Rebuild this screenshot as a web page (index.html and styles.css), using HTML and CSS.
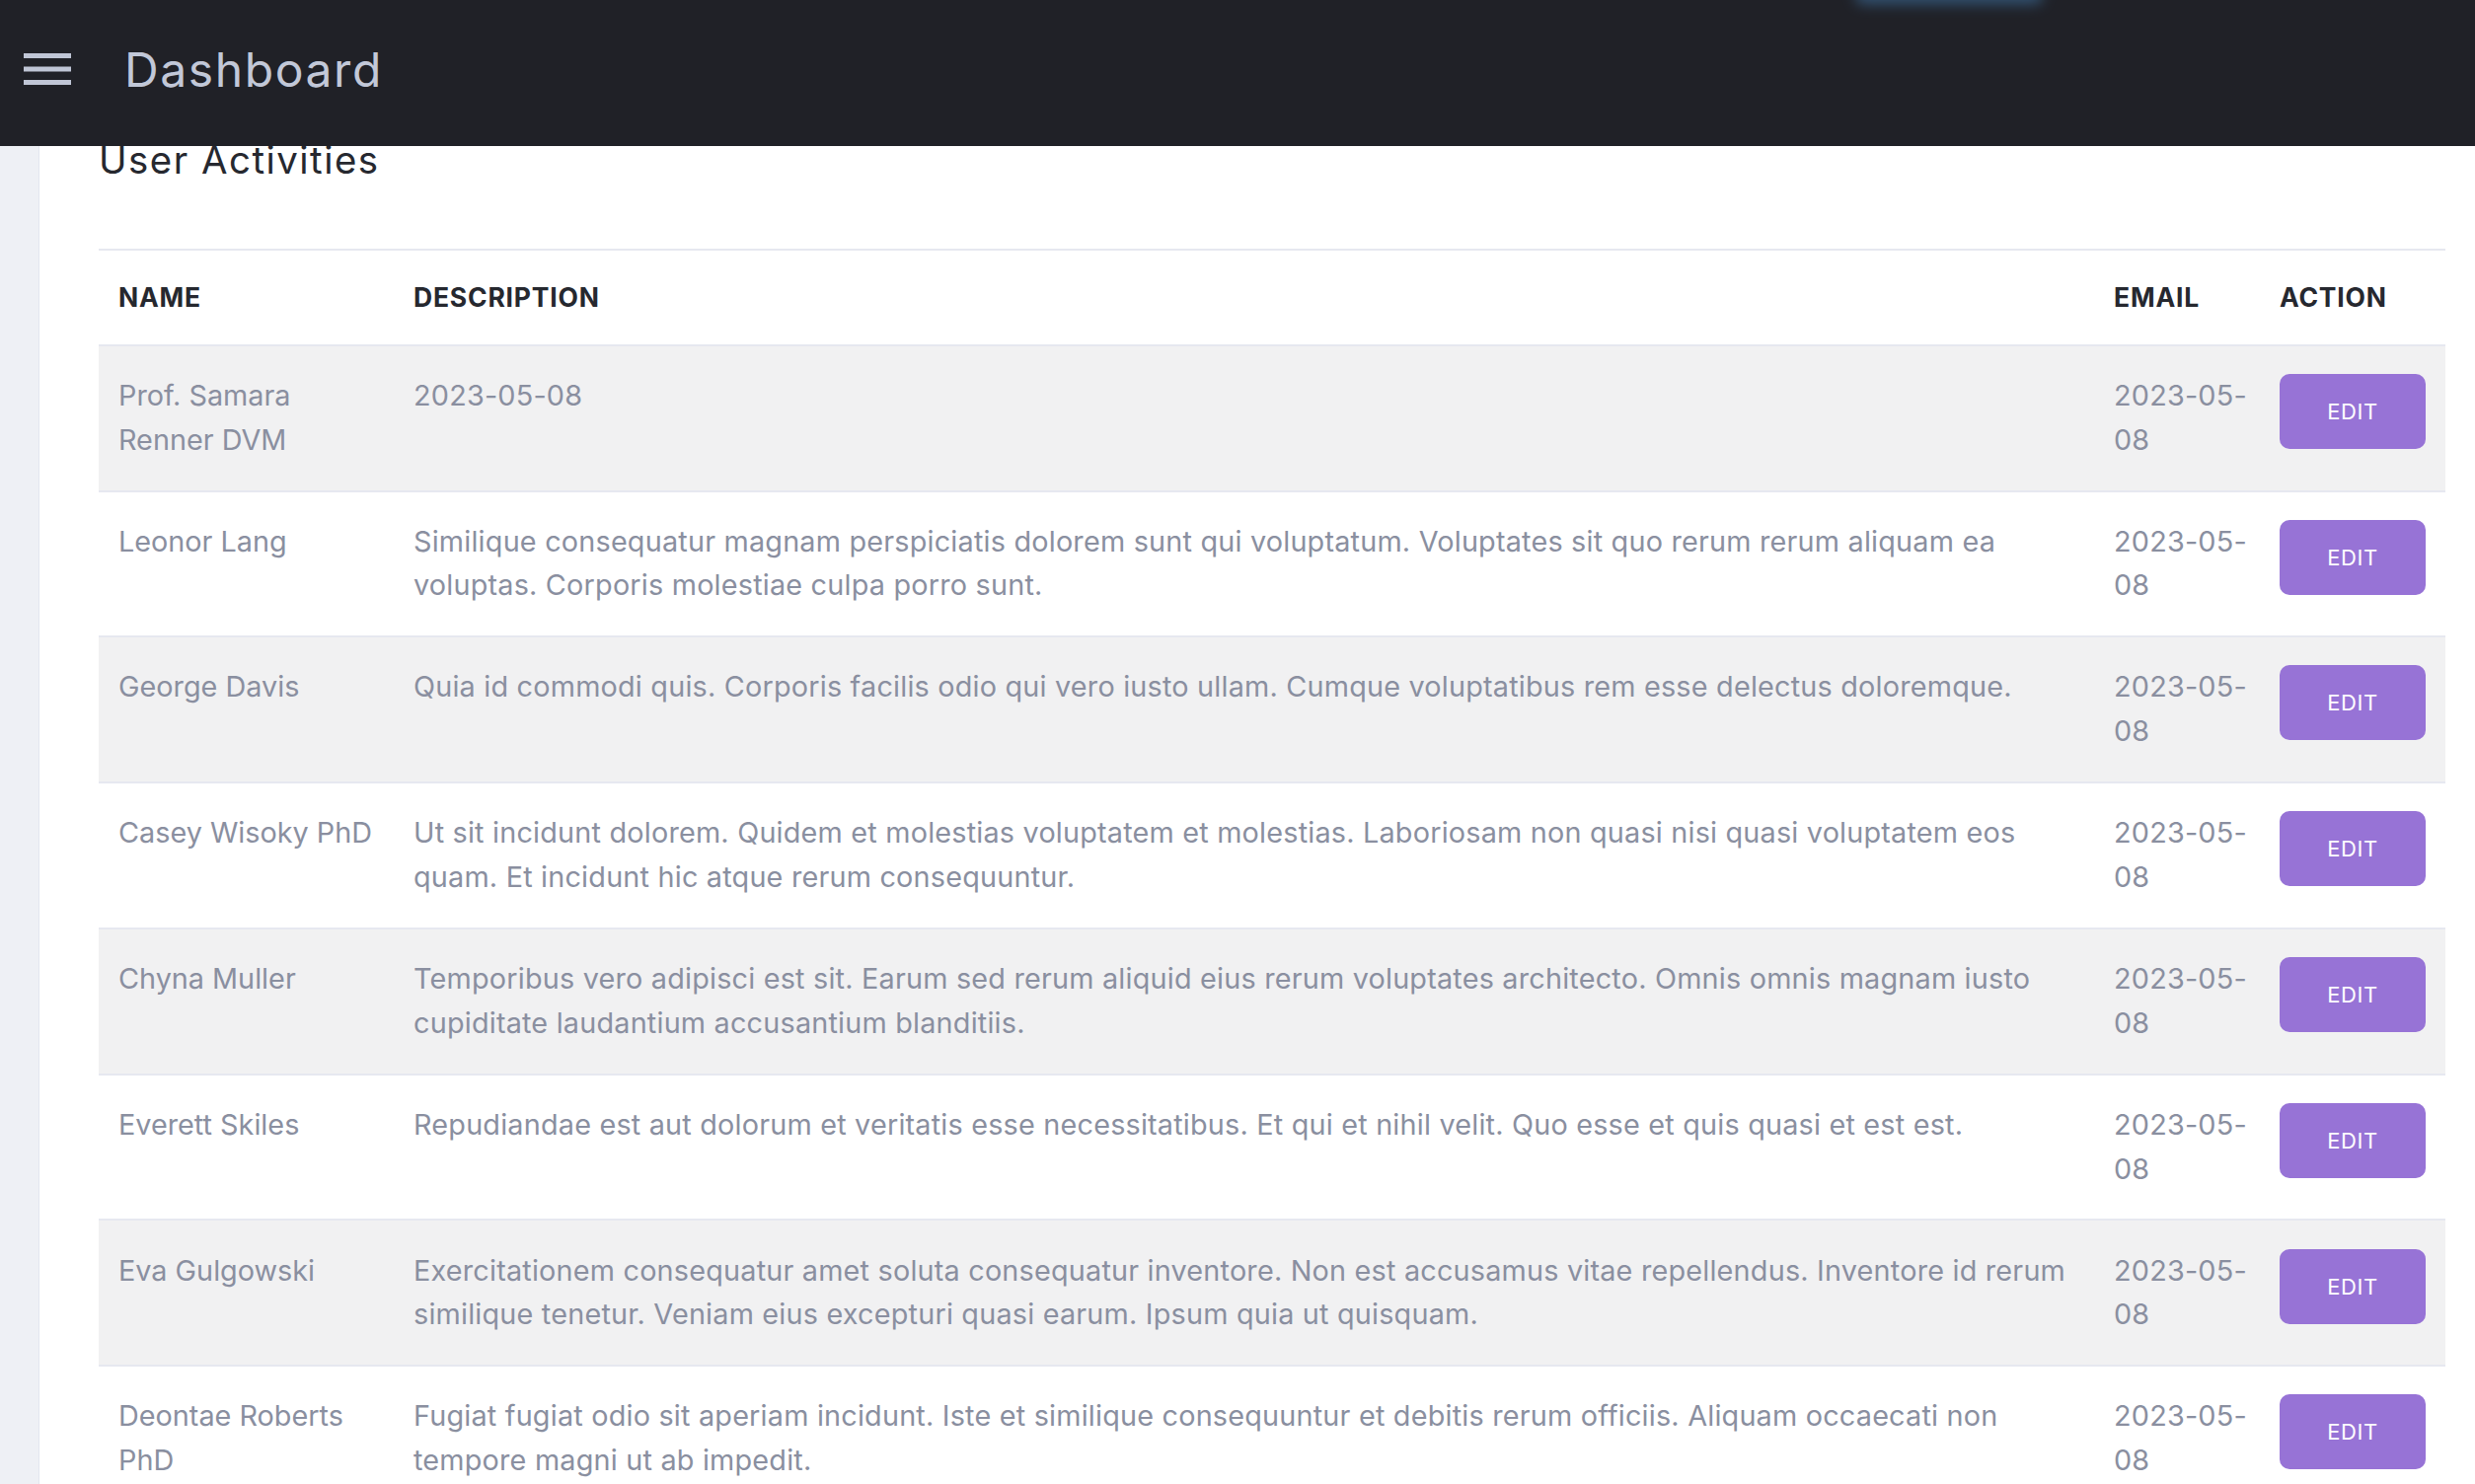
FILE: index.html
```html
<!DOCTYPE html>
<html lang="en">
<head>
<meta charset="utf-8">
<title>Dashboard</title>
<link rel="stylesheet" href="styles.css">
</head>
<body>
<header class="topbar">
  <div class="glow"></div>
  <button class="menu-btn" aria-label="Menu">
    <svg width="48" height="32" viewBox="0 0 48 32"><rect x="0" y="0" width="48" height="5" fill="#c0c6d6"/><rect x="0" y="13.5" width="48" height="5" fill="#c0c6d6"/><rect x="0" y="27" width="48" height="5" fill="#c0c6d6"/></svg>
  </button>
  <h1 class="brand">Dashboard</h1>
</header>
<div class="layout">
  <aside class="sidebar"></aside>
  <main class="main">
    <h2 class="title">User Activities</h2>
    <table class="activity-table">
      <colgroup>
        <col class="col-name"><col class="col-desc"><col class="col-email"><col class="col-action">
      </colgroup>
      <thead>
        <tr><th class="th-name">Name</th><th>Description</th><th>Email</th><th class="th-action">Action</th></tr>
      </thead>
      <tbody>
        <tr><td class="td-name">Prof. Samara<br>Renner DVM</td><td>2023-05-08</td><td>2023-05-<br>08</td><td class="td-action"><button class="btn-edit">EDIT</button></td></tr>
        <tr><td class="td-name">Leonor Lang</td><td>Similique consequatur magnam perspiciatis dolorem sunt qui voluptatum. Voluptates sit quo rerum rerum aliquam ea<br>voluptas. Corporis molestiae culpa porro sunt.</td><td>2023-05-<br>08</td><td class="td-action"><button class="btn-edit">EDIT</button></td></tr>
        <tr><td class="td-name">George Davis</td><td>Quia id commodi quis. Corporis facilis odio qui vero iusto ullam. Cumque voluptatibus rem esse delectus doloremque.</td><td>2023-05-<br>08</td><td class="td-action"><button class="btn-edit">EDIT</button></td></tr>
        <tr><td class="td-name">Casey Wisoky PhD</td><td>Ut sit incidunt dolorem. Quidem et molestias voluptatem et molestias. Laboriosam non quasi nisi quasi voluptatem eos<br>quam. Et incidunt hic atque rerum consequuntur.</td><td>2023-05-<br>08</td><td class="td-action"><button class="btn-edit">EDIT</button></td></tr>
        <tr><td class="td-name">Chyna Muller</td><td>Temporibus vero adipisci est sit. Earum sed rerum aliquid eius rerum voluptates architecto. Omnis omnis magnam iusto<br>cupiditate laudantium accusantium blanditiis.</td><td>2023-05-<br>08</td><td class="td-action"><button class="btn-edit">EDIT</button></td></tr>
        <tr><td class="td-name">Everett Skiles</td><td>Repudiandae est aut dolorum et veritatis esse necessitatibus. Et qui et nihil velit. Quo esse et quis quasi et est est.</td><td>2023-05-<br>08</td><td class="td-action"><button class="btn-edit">EDIT</button></td></tr>
        <tr><td class="td-name">Eva Gulgowski</td><td>Exercitationem consequatur amet soluta consequatur inventore. Non est accusamus vitae repellendus. Inventore id rerum<br>similique tenetur. Veniam eius excepturi quasi earum. Ipsum quia ut quisquam.</td><td>2023-05-<br>08</td><td class="td-action"><button class="btn-edit">EDIT</button></td></tr>
        <tr><td class="td-name">Deontae Roberts<br>PhD</td><td>Fugiat fugiat odio sit aperiam incidunt. Iste et similique consequuntur et debitis rerum officiis. Aliquam occaecati non<br>tempore magni ut ab impedit.</td><td>2023-05-<br>08</td><td class="td-action"><button class="btn-edit">EDIT</button></td></tr>
      </tbody>
    </table>
  </main>
</div>
</body>
</html>
```
FILE: styles.css
```css
html, body {
  margin: 0;
  padding: 0;
  height: 100%;
  overflow: hidden;
  background: #ffffff;
  font-family: "Inter", "Open Sans", sans-serif;
}

.topbar {
  position: relative;
  z-index: 2;
  height: 148px;
  box-sizing: border-box;
  background: #202127;
  display: flex;
  align-items: center;
  padding: 0 0 8px 24px;
}

.glow {
  position: absolute;
  top: -14px;
  left: 1880px;
  width: 190px;
  height: 18px;
  border-radius: 8px;
  background: #3b6a96;
  filter: blur(7px);
  opacity: 0.7;
}

.menu-btn {
  background: none;
  border: 0;
  padding: 0;
  margin: 0;
  display: block;
  cursor: pointer;
}

.menu-btn svg {
  display: block;
}

.brand {
  margin: 0 0 0 54px;
  font-size: 48px;
  font-weight: 400;
  letter-spacing: 1.6px;
  color: #c2c8d8;
}

.layout {
  display: flex;
  height: calc(100% - 148px);
}

.sidebar {
  width: 39px;
  flex: none;
  background: #eef0f5;
  border-right: 1px solid #e2e6ef;
}

.main {
  flex: 1;
  padding: 0 30px 0 60px;
  min-width: 0;
}

.title {
  margin: -10px 0 0;
  font-size: 38.4px;
  line-height: 48px;
  font-weight: 400;
  color: #26282f;
  letter-spacing: 1.5px;
}

.activity-table {
  width: 100%;
  margin-top: 66px;
  border-collapse: collapse;
  table-layout: fixed;
}

.col-name { width: 295px; }
.col-email { width: 168px; }
.col-action { width: 192px; }

.activity-table thead tr {
  border-top: 2px solid #e6e8f0;
  border-bottom: 2px solid #e6e8f0;
}

.activity-table th {
  text-align: left;
  padding: 25px 24px;
  font-size: 26.5px;
  line-height: 44.8px;
  font-weight: 700;
  text-transform: uppercase;
  letter-spacing: 0.8px;
  color: #26282f;
}

.activity-table th.th-name {
  padding-left: 20px;
}

.activity-table tbody tr {
  border-bottom: 2px solid #e6e8f0;
}

.activity-table tbody tr:nth-child(odd) {
  background: #f1f1f2;
}

.activity-table td {
  vertical-align: top;
  padding: 28.1px 24px;
  font-size: 28.8px;
  line-height: 44.8px;
  letter-spacing: 0.2px;
  color: #8a8fa0;
  white-space: nowrap;
}

.activity-table td.td-name {
  padding-left: 20px;
  letter-spacing: 0;
}

.activity-table td.td-action {
  padding-right: 20px;
}

.btn-edit {
  width: 148px;
  height: 76px;
  border: 0;
  border-radius: 10px;
  background: #9773d6;
  color: #ffffff;
  font-family: inherit;
  font-size: 22px;
  letter-spacing: 0.6px;
  cursor: pointer;
}
```
